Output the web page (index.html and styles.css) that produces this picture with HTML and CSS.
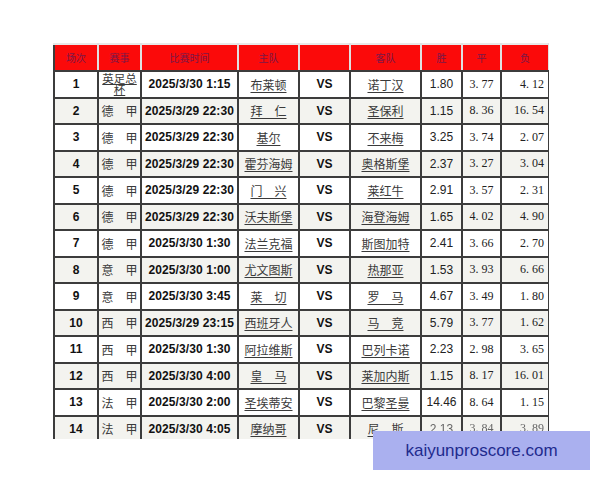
FILE: index.html
```html
<!DOCTYPE html>
<html lang="zh">
<head>
<meta charset="utf-8">
<title>赛程</title>
<link rel="stylesheet" href="styles.css">
</head>
<body>
<div class="page">
  <div class="clip">
    <table class="sched">
      <colgroup>
        <col class="c1"><col class="c2"><col class="c3"><col class="c4"><col class="c5"><col class="c6"><col class="c7"><col class="c8"><col class="c9">
      </colgroup>
      <thead>
        <tr><th>场次</th><th>赛事</th><th>比赛时间</th><th>主队</th><th></th><th>客队</th><th>胜</th><th>平</th><th>负</th></tr>
      </thead>
      <tbody>
        <tr><td class="no">1</td><td class="lg cupcell"><span class="u cup">英足总杯</span></td><td class="dt">2025/3/30 1:15</td><td class="tm"><span class="u">布莱顿</span></td><td class="vs">VS</td><td class="tm"><span class="u">诺丁汉</span></td><td class="w">1.80</td><td class="d">3. 77</td><td class="l">4. 12</td></tr>
        <tr class="alt"><td class="no">2</td><td class="lg">德　甲</td><td class="dt">2025/3/29 22:30</td><td class="tm"><span class="u">拜　仁</span></td><td class="vs">VS</td><td class="tm"><span class="u">圣保利</span></td><td class="w">1.15</td><td class="d">8. 36</td><td class="l">16. 54</td></tr>
        <tr><td class="no">3</td><td class="lg">德　甲</td><td class="dt">2025/3/29 22:30</td><td class="tm"><span class="u">基尔</span></td><td class="vs">VS</td><td class="tm"><span class="u">不来梅</span></td><td class="w">3.25</td><td class="d">3. 74</td><td class="l">2. 07</td></tr>
        <tr class="alt"><td class="no">4</td><td class="lg">德　甲</td><td class="dt">2025/3/29 22:30</td><td class="tm"><span class="u">霍芬海姆</span></td><td class="vs">VS</td><td class="tm"><span class="u">奥格斯堡</span></td><td class="w">2.37</td><td class="d">3. 27</td><td class="l">3. 04</td></tr>
        <tr><td class="no">5</td><td class="lg">德　甲</td><td class="dt">2025/3/29 22:30</td><td class="tm"><span class="u">门　兴</span></td><td class="vs">VS</td><td class="tm"><span class="u">莱红牛</span></td><td class="w">2.91</td><td class="d">3. 57</td><td class="l">2. 31</td></tr>
        <tr class="alt"><td class="no">6</td><td class="lg">德　甲</td><td class="dt">2025/3/29 22:30</td><td class="tm"><span class="u">沃夫斯堡</span></td><td class="vs">VS</td><td class="tm"><span class="u">海登海姆</span></td><td class="w">1.65</td><td class="d">4. 02</td><td class="l">4. 90</td></tr>
        <tr><td class="no">7</td><td class="lg">德　甲</td><td class="dt">2025/3/30 1:30</td><td class="tm"><span class="u">法兰克福</span></td><td class="vs">VS</td><td class="tm"><span class="u">斯图加特</span></td><td class="w">2.41</td><td class="d">3. 66</td><td class="l">2. 70</td></tr>
        <tr class="alt"><td class="no">8</td><td class="lg">意　甲</td><td class="dt">2025/3/30 1:00</td><td class="tm"><span class="u">尤文图斯</span></td><td class="vs">VS</td><td class="tm"><span class="u">热那亚</span></td><td class="w">1.53</td><td class="d">3. 93</td><td class="l">6. 66</td></tr>
        <tr><td class="no">9</td><td class="lg">意　甲</td><td class="dt">2025/3/30 3:45</td><td class="tm"><span class="u">莱　切</span></td><td class="vs">VS</td><td class="tm"><span class="u">罗　马</span></td><td class="w">4.67</td><td class="d">3. 49</td><td class="l">1. 80</td></tr>
        <tr class="alt"><td class="no">10</td><td class="lg">西　甲</td><td class="dt">2025/3/29 23:15</td><td class="tm"><span class="u">西班牙人</span></td><td class="vs">VS</td><td class="tm"><span class="u">马　竞</span></td><td class="w">5.79</td><td class="d">3. 77</td><td class="l">1. 62</td></tr>
        <tr><td class="no">11</td><td class="lg">西　甲</td><td class="dt">2025/3/30 1:30</td><td class="tm"><span class="u">阿拉维斯</span></td><td class="vs">VS</td><td class="tm"><span class="u">巴列卡诺</span></td><td class="w">2.23</td><td class="d">2. 98</td><td class="l">3. 65</td></tr>
        <tr class="alt"><td class="no">12</td><td class="lg">西　甲</td><td class="dt">2025/3/30 4:00</td><td class="tm"><span class="u">皇　马</span></td><td class="vs">VS</td><td class="tm"><span class="u">莱加内斯</span></td><td class="w">1.15</td><td class="d">8. 17</td><td class="l">16. 01</td></tr>
        <tr><td class="no">13</td><td class="lg">法　甲</td><td class="dt">2025/3/30 2:00</td><td class="tm"><span class="u">圣埃蒂安</span></td><td class="vs">VS</td><td class="tm"><span class="u">巴黎圣曼</span></td><td class="w">14.46</td><td class="d">8. 64</td><td class="l">1. 15</td></tr>
        <tr class="alt"><td class="no">14</td><td class="lg">法　甲</td><td class="dt">2025/3/30 4:05</td><td class="tm"><span class="u">摩纳哥</span></td><td class="vs">VS</td><td class="tm"><span class="u">尼　斯</span></td><td class="w fade">2.13</td><td class="d fade">3. 84</td><td class="l fade">3. 89</td></tr>
      </tbody>
    </table>
  </div>
  <div class="mark">kaiyunproscore.com</div>
</div>
</body>
</html>
```

FILE: styles.css
```css
html, body {
  margin: 0;
  padding: 0;
  background: #ffffff;
}
.page {
  position: relative;
  width: 600px;
  height: 480px;
  overflow: hidden;
  padding: 43px 0 0 53px;
  box-sizing: border-box;
}
.clip {
  width: 496px;
  height: 396px;
  overflow: hidden;
}
.sched {
  border-collapse: collapse;
  table-layout: fixed;
  width: 495px;
  font-family: "Liberation Sans", Arial, sans-serif;
  color: #111;
}
.c1 { width: 44px; }
.c2 { width: 43px; }
.c3 { width: 97px; }
.c4 { width: 61px; }
.c5 { width: 51px; }
.c6 { width: 71px; }
.c7 { width: 41px; }
.c8 { width: 39px; }
.c9 { width: 48px; }
.sched th, .sched td {
  border: 2px solid #3c3c3c;
  padding: 0;
  text-align: center;
  vertical-align: middle;
  white-space: nowrap;
  overflow: hidden;
}
.sched th {
  background: #fb0a0a;
  height: 25px;
  font-family: "Noto Sans CJK SC", sans-serif;
  font-weight: normal;
  font-size: 10px;
  color: #7c1848;
  border-top-color: #e8e8e8;
  border-left-color: #e0e0e0;
  border-right-color: #e0e0e0;
}
.sched th:first-child { border-left-color: #3c3c3c; }
.sched td {
  height: 24.5px;
  font-size: 12px;
}
.sched td.cupcell {
  overflow: visible;
  line-height: 11px;
}
.sched tr.alt td { background: #f3f3ef; }
.no, .dt, .vs {
  font-weight: bold;
}
.dt { letter-spacing: 0.1px; }
.lg, .tm {
  font-family: "Noto Sans CJK SC", sans-serif;
  font-size: 12px;
  color: #3a3a3a;
}
.u {
  text-decoration: underline;
  text-underline-offset: 2px;
  text-decoration-thickness: 1px;
}
.cup {
  display: inline-block;
  width: 38px;
  white-space: normal;
  font-size: 11.5px;
  line-height: 11px;
  text-underline-offset: 1px;
}
.w {
  font-family: "Liberation Sans", Arial, sans-serif;
  font-size: 12px;
  color: #222;
}
.d, .l {
  font-family: "Liberation Serif", serif;
  font-size: 13px;
  color: #222;
}
.l {
  text-align: right !important;
  padding-right: 4px !important;
}
.fade {
  color: #666 !important;
  filter: blur(0.6px);
}
.mark {
  position: absolute;
  left: 373px;
  top: 431px;
  width: 217px;
  height: 39px;
  background: #aab0ef;
  color: #1f2b8e;
  font-family: "Liberation Sans", Arial, sans-serif;
  font-size: 17px;
  line-height: 39px;
  text-align: center;
}
```
